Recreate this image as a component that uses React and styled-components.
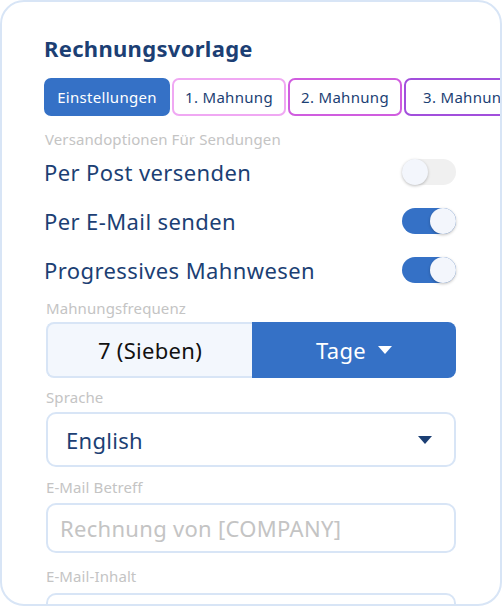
import React from "react";
import styled, { createGlobalStyle } from "styled-components";

const Global = createGlobalStyle`
  html, body { margin: 0; padding: 0; background: #ffffff; }
  * { box-sizing: border-box; }
  body { font-family: "Noto Sans", "Open Sans", sans-serif; }
`;

const NAVY = "#1c3f74";
const BLUE = "#3571c6";
const LINE = "#d8e5f6";
const MUTED = "#c4c4c4";

const Card = styled.div`
  width: 502px;
  height: 606px;
  border: 2px solid ${LINE};
  border-radius: 24px;
  overflow: hidden;
  background: #fff;
  padding: 32px 44px 0 42px;
  display: flex;
  flex-direction: column;
  & > * { flex: none; }
`;

const Title = styled.h1`
  margin: 0;
  font-size: 22px;
  line-height: 28px;
  font-weight: 700;
  letter-spacing: 0.3px;
  color: ${NAVY};
`;

const Tabs = styled.div`
  display: flex;
  gap: 2px;
  margin-top: 16px;
  width: 600px;
`;

const Tab = styled.div`
  flex: none;
  width: ${(p) => p.$w}px;
  height: 38px;
  border-radius: 7px;
  border: 2px solid ${(p) => p.$border};
  background: ${(p) => (p.$active ? BLUE : "#fff")};
  color: ${(p) => (p.$active ? "#fff" : NAVY)};
  font-size: 15px;
  letter-spacing: 0.3px;
  display: flex;
  align-items: center;
  justify-content: center;
`;

const Label = styled.div`
  margin-top: ${(p) => p.$mt}px;
  padding-left: ${(p) => p.$pl ?? 2}px;
  font-size: 15px;
  letter-spacing: 0.1px;
  line-height: 20px;
  color: ${MUTED};
`;

const Rows = styled.div`
  display: flex;
  flex-direction: column;
  margin-top: -2px;
`;

const Row = styled.div`
  height: 49px;
  display: flex;
  align-items: center;
  justify-content: space-between;
`;

const RowText = styled.span`
  font-size: 22px;
  letter-spacing: 0.4px;
  color: ${NAVY};
`;

const Track = styled.div`
  position: relative;
  width: 54px;
  height: 26px;
  border-radius: 13px;
  background: ${(p) => (p.$on ? BLUE : "#f0f0f0")};
`;

const Knob = styled.div`
  position: absolute;
  top: 0;
  left: ${(p) => (p.$on ? "28px" : "0")};
  width: 26px;
  height: 26px;
  border-radius: 50%;
  background: #f3f6fc;
  box-shadow: 0 1px 3px rgba(0, 0, 0, 0.25);
`;

const Toggle = ({ on }) => (
  <Track $on={on}>
    <Knob $on={on} />
  </Track>
);

const Split = styled.div`
  margin-top: 4px;
  margin-left: 2px;
  display: grid;
  grid-template-columns: 206px 1fr;
  height: 56px;
`;

const SplitLeft = styled.div`
  background: #f3f7fd;
  border: 2px solid ${LINE};
  border-right: none;
  border-radius: 8px 0 0 8px;
  display: flex;
  align-items: center;
  justify-content: center;
  font-size: 22px;
  letter-spacing: 0.3px;
  color: #111;
`;

const SplitRight = styled.div`
  background: ${BLUE};
  border-radius: 0 8px 8px 0;
  display: flex;
  align-items: center;
  justify-content: center;
  gap: 12px;
  font-size: 22px;
  letter-spacing: 0.3px;
  color: #fff;
`;

const Caret = ({ color, w = 14, h = 8 }) => (
  <svg width={w} height={h} viewBox="0 0 14 8">
    <path d="M0 0 H14 L7 8 Z" fill={color} />
  </svg>
);

const Select = styled.div`
  margin-top: 5px;
  margin-left: 2px;
  height: 55px;
  border: 2px solid ${LINE};
  border-radius: 10px;
  display: flex;
  align-items: center;
  justify-content: space-between;
  padding: 0 22px 0 18px;
  font-size: 22px;
  letter-spacing: 0.3px;
  color: ${NAVY};
`;

const Input = styled.div`
  margin-top: ${(p) => p.$mt}px;
  margin-left: 2px;
  height: ${(p) => p.$h}px;
  border: 2px solid ${LINE};
  border-radius: 10px;
  display: flex;
  align-items: center;
  padding: 0 12px;
  font-size: 22px;
  letter-spacing: 0.3px;
  color: ${MUTED};
`;

export default function App() {
  return (
    <>
      <Global />
      <Card>
        <Title>Rechnungsvorlage</Title>
        <Tabs>
          <Tab $w={126} $active $border={BLUE}>Einstellungen</Tab>
          <Tab $w={114} $border="#f0a8f3">1. Mahnung</Tab>
          <Tab $w={114} $border="#d05ddf">2. Mahnung</Tab>
          <Tab $w={126} $border="#a24fdc">3. Mahnung</Tab>
        </Tabs>
        <Label $mt={13} $pl={1}>Versandoptionen Für Sendungen</Label>
        <Rows>
          <Row>
            <RowText>Per Post versenden</RowText>
            <Toggle on={false} />
          </Row>
          <Row>
            <RowText>Per E-Mail senden</RowText>
            <Toggle on />
          </Row>
          <Row>
            <RowText>Progressives Mahnwesen</RowText>
            <Toggle on />
          </Row>
        </Rows>
        <Label $mt={4}>Mahnungsfrequenz</Label>
        <Split>
          <SplitLeft>7 (Sieben)</SplitLeft>
          <SplitRight>
            Tage <Caret color="#fff" />
          </SplitRight>
        </Split>
        <Label $mt={9}>Sprache</Label>
        <Select>
          English <Caret color={NAVY} />
        </Select>
        <Label $mt={10}>E-Mail Betreff</Label>
        <Input $mt={6} $h={50}>Rechnung von [COMPANY]</Input>
        <Label $mt={13}>E-Mail-Inhalt</Label>
        <Input $mt={7} $h={80} />
      </Card>
    </>
  );
}
